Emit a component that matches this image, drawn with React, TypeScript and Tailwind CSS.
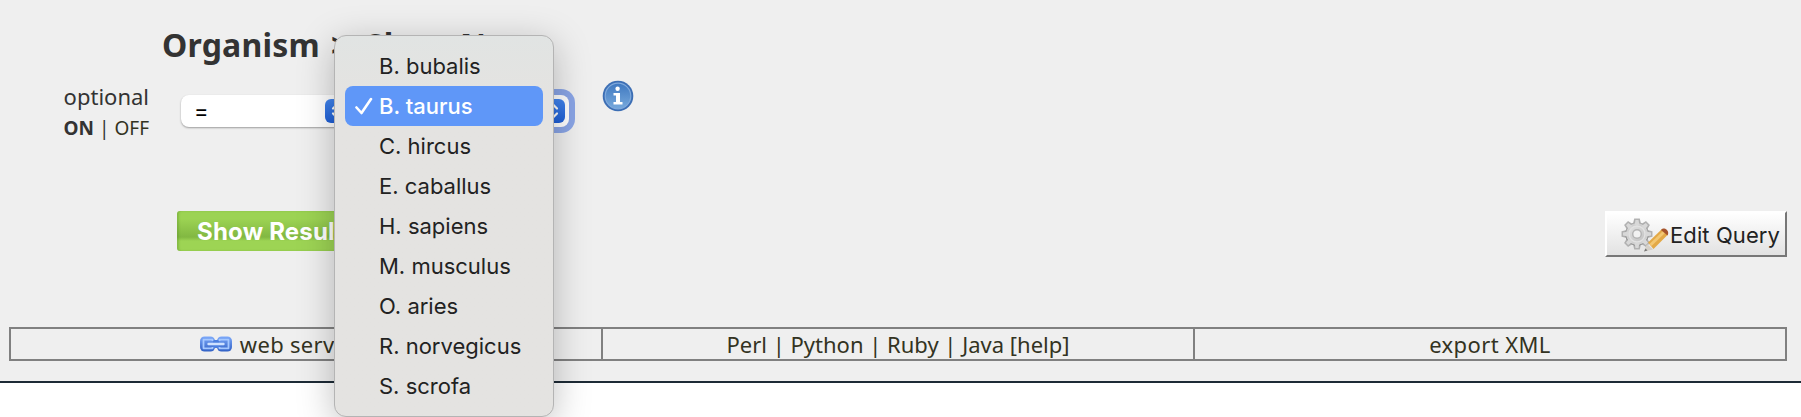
import type { ReactNode } from "react";

const organisms = [
  "B. bubalis",
  "B. taurus",
  "C. hircus",
  "E. caballus",
  "H. sapiens",
  "M. musculus",
  "O. aries",
  "R. norvegicus",
  "S. scrofa",
];

function Stepper() {
  return (
    <span className="flex h-6 w-6 items-center justify-center rounded-[6px] bg-linear-to-b from-[#4285ee] to-[#1f5fd6]">
      <svg width="12" height="18" viewBox="0 0 12 18" fill="none" stroke="#fff" strokeWidth="2.2" strokeLinecap="round" strokeLinejoin="round">
        <path d="M2 6.5 6 2.5l4 4M2 11.5l4 4 4-4" />
      </svg>
    </span>
  );
}

function InfoIcon() {
  return (
    <svg width="32" height="32" viewBox="0 0 32 32">
      <defs>
        <linearGradient id="info" x1="0" y1="0" x2="0" y2="1">
          <stop offset="0" stopColor="#3f78c0" />
          <stop offset="1" stopColor="#77a9dc" />
        </linearGradient>
      </defs>
      <circle cx="16" cy="16" r="15.300" fill="#3c6eb4" />
      <circle cx="16" cy="16" r="12.800" fill="url(#info)" stroke="#7fa9dc" strokeWidth="1.200" />
      <circle cx="15.600" cy="8.800" r="2.200" fill="#fff" />
      <path d="M11.500 13h6.500v9h2.500v2.400h-9V22H14v-6.600h-2.500z" fill="#fff" />
    </svg>
  );
}

function GearPencilIcon() {
  const teeth = [0, 45, 90, 135, 180, 225, 270, 315];
  return (
    <svg width="50" height="36" viewBox="0 0 50 36">
      <defs>
        <linearGradient id="gear" gradientUnits="userSpaceOnUse" x1="6" y1="4" x2="28" y2="34">
          <stop offset="0" stopColor="#ececec" />
          <stop offset="1" stopColor="#b4b4b4" />
        </linearGradient>
        <linearGradient id="gearEdge" gradientUnits="userSpaceOnUse" x1="17" y1="2" x2="17" y2="34">
          <stop offset="0" stopColor="#b4b4b4" />
          <stop offset="1" stopColor="#7c7c7c" />
        </linearGradient>
      </defs>
      <g stroke="url(#gearEdge)" strokeWidth="2" fill="url(#gearEdge)">
        {teeth.map((a) => (
          <path key={a} d="M14 8l1-4.500h4L20 8z" transform={`rotate(${a} 17 18)`} />
        ))}
        <circle cx="17" cy="18" r="10.800" />
      </g>
      <circle cx="17" cy="18" r="10.800" fill="#cecece" />
      <g fill="#d8d8d8">
        {teeth.map((a) => (
          <path key={a} d="M14.500 9l1-5h3l1 5z" transform={`rotate(${a} 17 18)`} />
        ))}
      </g>
      <circle cx="17" cy="18" r="8" fill="url(#gear)" stroke="#e2e2e2" strokeWidth="1.500" />
      <circle cx="17" cy="18" r="4.300" fill="#f2f2f2" stroke="#b5b5b5" strokeWidth="1.500" />
      <path d="M24 35.500 27 28l6 5.500z" fill="#d5d0c8" />
      <path d="M24 35.500l1.500-3 2 2z" fill="#777" />
      <path d="M28 26.500 42 13l6 5.500L33.500 33z" fill="#e3a947" />
      <path d="M29.500 28 43.500 14.500l2 2L31.500 30z" fill="#f3c772" />
      <path d="M41 14c2-4 9.500 0 6.500 5.500z" fill="#a5532c" />
    </svg>
  );
}

function LinkIcon() {
  return (
    <svg width="32" height="16" viewBox="0 0 32 16" fill="none">
      <defs>
        <linearGradient id="chain" gradientUnits="userSpaceOnUse" x1="0" y1="0" x2="0" y2="16">
          <stop offset="0" stopColor="#7fabfb" />
          <stop offset="1" stopColor="#2f5fc4" />
        </linearGradient>
      </defs>
      <rect x="0" y="0.500" width="15" height="15" rx="4.500" fill="url(#chain)" />
      <rect x="17" y="0.500" width="15" height="15" rx="4.500" fill="url(#chain)" />
      <rect x="13" y="4" width="6" height="8" fill="#4d80e0" />
      <path d="M12.500 5V3.700H3.500v8.600h9V11M19.500 5V3.700h9v8.600h-9V11" stroke="#a5c8ff" strokeWidth="1.800" strokeLinejoin="round" />
      <path d="M8.500 8h15" stroke="#cfe2ff" strokeWidth="2.400" strokeLinecap="round" />
    </svg>
  );
}

function Cell({ children }: { children: ReactNode }) {
  return (
    <div className="flex h-[34px] w-[594px] shrink-0 items-center justify-center border-2 border-[#808080] text-[22px] leading-[30px] whitespace-pre text-[#333322] not-first:-ml-[2px]">
      {children}
    </div>
  );
}

export default function App() {
  return (
    <div className="relative h-[417px] w-[1801px] overflow-hidden bg-white font-['Noto_Sans',sans-serif]">
      <main className="flex h-[383px] flex-col border-b-2 border-[#1d2b36] bg-[#efefef] text-[#333]">
        <h1 className="mt-[23px] mb-px ml-[162px] flex h-11 text-[32px] leading-[44px] font-bold whitespace-nowrap">
          <span className="w-[169px] tracking-[0.2px]">Organism</span>
          <span className="w-[35px]">&gt;</span>
          <span className="w-[94px]">Show</span>
          <span className="tracking-[-2.5px]">Name</span>
        </h1>

        <div className="flex h-[143px] items-start">
          <div className="w-[149px] pt-[13px] text-right">
            <div className="text-[22px] leading-[30px]">optional</div>
            <div className="mt-[2px] text-[19px] leading-[30px] whitespace-nowrap">
              <b>ON</b> | <span className="text-[#333322]">OFF</span>
            </div>
          </div>
          <div className="mt-[27px] ml-8 flex h-8 w-[172px] items-center justify-between rounded-lg bg-white pr-1 pl-[13px] font-['Inter',sans-serif] text-[22px] text-black shadow-[0_1px_2px_rgba(0,0,0,0.35)]">
            <span>=</span>
            <Stepper />
          </div>
          <div className="mt-[27px] ml-4 flex h-8 w-[200px] items-center justify-end rounded-lg bg-white pr-1 shadow-[0_0_0_6px_#8aa5e6]">
            <Stepper />
          </div>
          <div className="mt-[12px] ml-[33px]">
            <InfoIcon />
          </div>
        </div>

        <div className="flex h-[116px] items-start justify-between pr-[14px] pl-[177px] font-['Inter',sans-serif]">
          <button className="h-10 w-[184px] rounded-[3px] bg-linear-to-b from-[#9cd353] from-20% via-[#82b842] via-65% to-[#9dd454] to-75% pt-[2px] pl-5 text-left text-[24px] leading-[38px] font-bold tracking-[0.2px] whitespace-nowrap text-white shadow-[inset_2px_0_2px_rgba(90,140,40,0.35)]">
            Show Results
          </button>
          <button className="flex h-[46px] w-[182px] items-center border-2 border-t-white border-r-[#777] border-b-[#777] border-l-white bg-linear-to-b from-white to-[#e2e2e2] pl-[13px] text-[22px] whitespace-nowrap text-[#222]">
            <GearPencilIcon />
            <span className="pt-[2px] tracking-[0.1px]">Edit Query</span>
          </button>
        </div>

        <div className="ml-[9px] flex">
          <Cell>
            <LinkIcon />
            <span className="ml-2 tracking-[0.3px]">web service URL</span>
          </Cell>
          <Cell>Perl | Python | Ruby | Java [help]</Cell>
          <Cell>
            <span className="tracking-[0.4px]">export XML</span>
          </Cell>
        </div>
      </main>

      <ul className="absolute top-[35px] left-[334px] h-[382px] w-[220px] rounded-[12px] border border-[#b4b4b4] bg-[#e4e3e1] bg-linear-to-b from-[#e1e4e3] to-[#e4e3e1] to-15% px-[10px] pt-[10px] font-['Inter',sans-serif] text-[22px] text-[#222] shadow-[0_8px_36px_rgba(0,0,0,0.25)]">
        {organisms.map((name) => {
          const on = name === "B. taurus";
          return (
            <li
              key={name}
              className={
                on
                  ? "flex h-10 items-center rounded-lg bg-[#5f97f8] whitespace-nowrap text-white"
                  : "flex h-10 items-center whitespace-nowrap"
              }
            >
              <span className="flex w-[34px] pl-[10px]">
                {on && (
                  <svg width="18" height="18" viewBox="0 0 18 18" fill="none" stroke="#fff" strokeWidth="2.600" strokeLinecap="round" strokeLinejoin="round">
                    <path d="M1.500 10.500 6.500 16 16 2" />
                  </svg>
                )}
              </span>
              <span className={on ? "font-medium" : ""}>{name}</span>
            </li>
          );
        })}
      </ul>
    </div>
  );
}
